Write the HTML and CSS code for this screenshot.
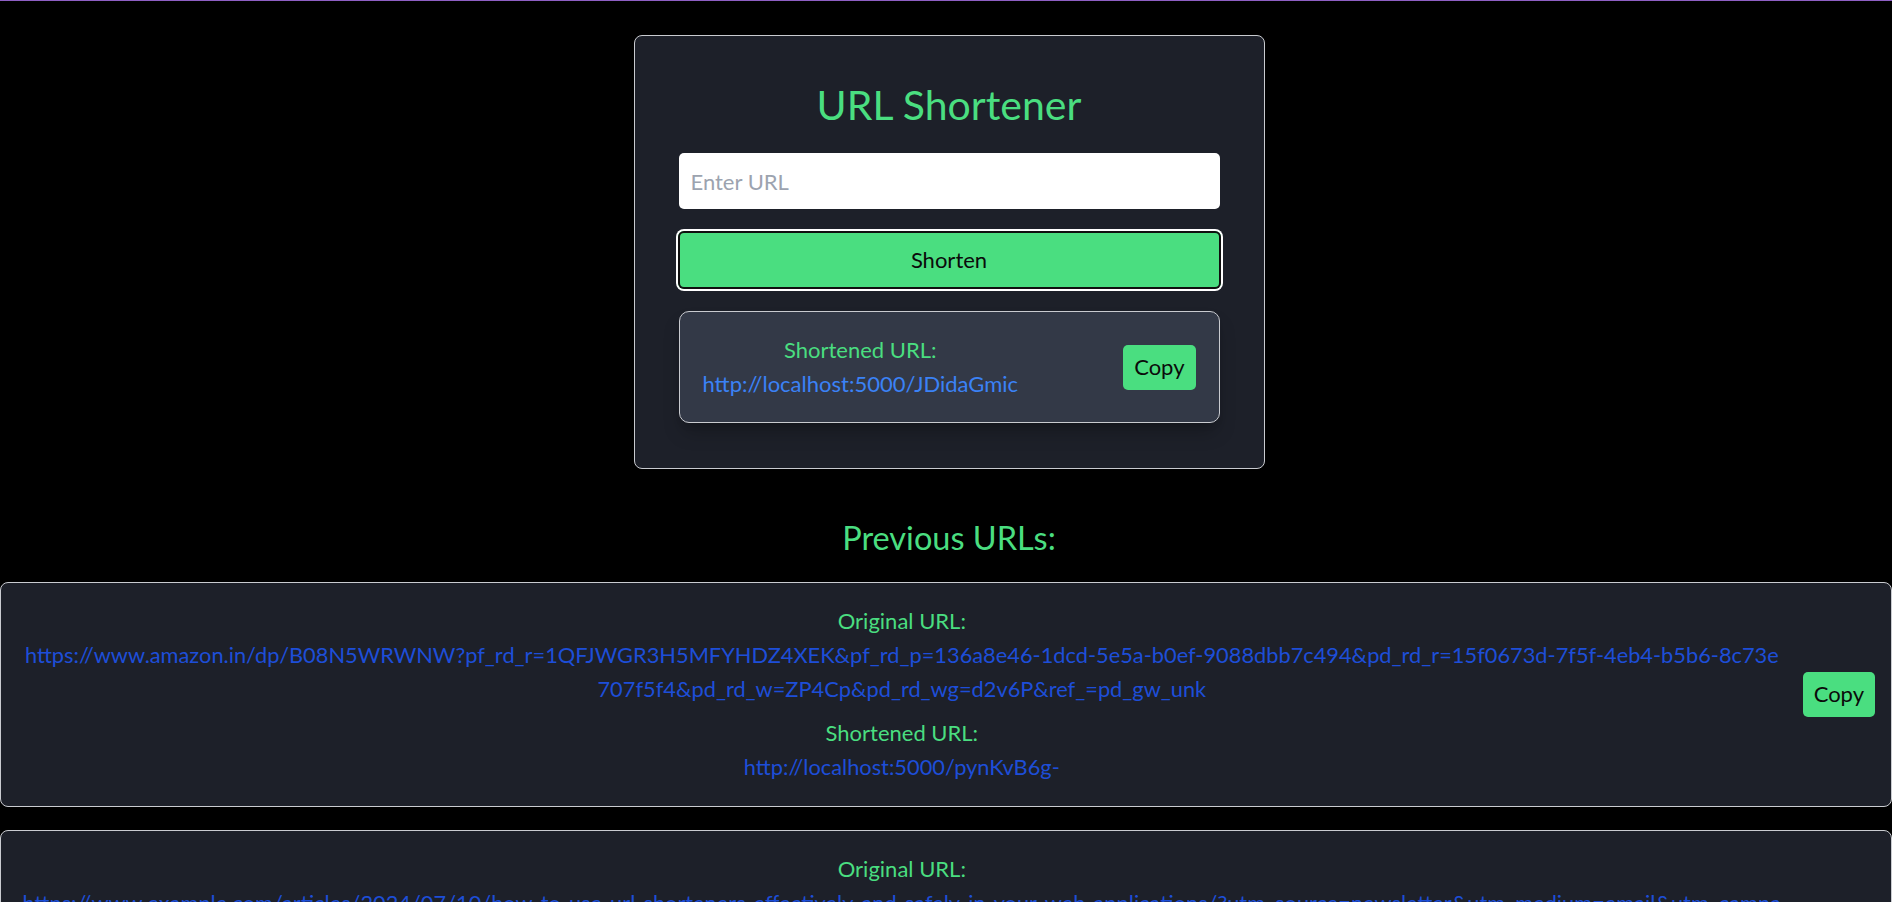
FILE: index.html
```html
<!DOCTYPE html>
<html lang="en">
<head>
<meta charset="utf-8">
<title>URL Shortener</title>
<link rel="stylesheet" href="styles.css">
</head>
<body>
<div class="topline"></div>
<main class="top">
  <section class="shortener">
    <h1 class="title">URL Shortener</h1>
    <input class="url-input" type="text" placeholder="Enter URL">
    <button class="shorten-btn" type="button">Shorten</button>
    <div class="result">
      <div class="result-text">
        <p class="label">Shortened URL:</p>
        <a class="result-link" href="#">http://localhost:5000/JDidaGmic</a>
      </div>
      <button class="copy-btn" type="button">Copy</button>
    </div>
  </section>
  <h2 class="prev-title">Previous URLs:</h2>
</main>
<ul class="history">
  <li class="item">
    <div class="item-text">
      <p class="label">Original URL:</p>
      <a class="orig-link" href="#">https://www.amazon.in/dp/B08N5WRWNW?pf_rd_r=1QFJWGR3H5MFYHDZ4XEK&amp;pf_rd_p=136a8e46-1dcd-5e5a-b0ef-9088dbb7c494&amp;pd_rd_r=15f0673d-7f5f-4eb4-b5b6-8c73e707f5f4&amp;pd_rd_w=ZP4Cp&amp;pd_rd_wg=d2v6P&amp;ref_=pd_gw_unk</a>
      <p class="label label-gap">Shortened URL:</p>
      <a class="short-link" href="#">http://localhost:5000/pynKvB6g-</a>
    </div>
    <button class="copy-btn" type="button">Copy</button>
  </li>
  <li class="item">
    <div class="item-text">
      <p class="label">Original URL:</p>
      <a class="orig-link" href="#">https://www.example.com/articles/2024/07/10/how-to-use-url-shorteners-effectively-and-safely-in-your-web-applications/?utm_source=newsletter&amp;utm_medium=email&amp;utm_campaign=july_2024_update&amp;utm_content=article_link</a>
      <p class="label label-gap">Shortened URL:</p>
      <a class="short-link" href="#">http://localhost:5000/Xk29fQmLp</a>
    </div>
    <button class="copy-btn" type="button">Copy</button>
  </li>
</ul>
</body>
</html>
```
FILE: styles.css
```css
* { box-sizing: border-box; }
html, body { margin: 0; padding: 0; }
body {
  background: #000;
  font-family: "Lato", "Noto Sans", sans-serif;
  color: #fff;
  overflow: hidden;
}
.topline { height: 1px; background: #8e5fc4; }
.top {
  display: flex;
  flex-direction: column;
  align-items: center;
  padding-left: 6px;
  padding-top: 34px;
}
.shortener {
  width: 631px;
  background: #1d2029;
  border: 1px solid #c9cbd0;
  border-radius: 8px;
  padding: 44px 44px 45px;
  display: flex;
  flex-direction: column;
}
.title {
  margin: 0 0 24px;
  font-size: 41px;
  line-height: 49px;
  font-weight: 400;
  color: #4ade80;
  text-align: center;
}
.url-input {
  height: 56px;
  width: 100%;
  border: none;
  border-radius: 5px;
  background: #fff;
  padding: 0 12px;
  font-family: inherit;
  font-size: 22px;
  color: #111;
  outline: none;
}
.url-input::placeholder { color: #9ca3af; }
.shorten-btn {
  margin: 22px -1px 0;
  height: 58px;
  background: #4ade80;
  border: none;
  border-radius: 6px;
  box-shadow: inset 0 0 0 2px #101010, 0 0 0 2px #fff;
  font-family: inherit;
  font-size: 22px;
  line-height: 34px;
  color: #0b0b0b;
  padding: 0;
}
.result {
  margin-top: 22px;
  display: flex;
  align-items: center;
  justify-content: space-between;
  background: #333947;
  border: 1px solid #c9cbd0;
  border-radius: 10px;
  padding: 21px 23px;
  box-shadow: 0 12px 19px -4px rgba(0,0,0,.25), 0 5px 8px -5px rgba(0,0,0,.2);
}
.result-text { text-align: center; }
.label {
  margin: 0;
  font-size: 22px;
  line-height: 34px;
  color: #4ade80;
}
.result-link {
  display: block;
  font-size: 22px;
  line-height: 34px;
  color: #3b82f6;
  text-decoration: none;
}
.copy-btn {
  flex: none;
  height: 45px;
  padding: 0 11px;
  background: #4ade80;
  border: none;
  border-radius: 5px;
  font-family: inherit;
  font-size: 22px;
  line-height: 34px;
  color: #0b0b0b;
}
.prev-title {
  margin: 49px 0 25px;
  font-size: 32.5px;
  line-height: 39px;
  font-weight: 400;
  color: #4ade80;
}
.history {
  list-style: none;
  margin: 0;
  padding: 0;
  display: flex;
  flex-direction: column;
  gap: 23px;
}
.item {
  display: flex;
  align-items: center;
  gap: 20px;
  background: #1d2029;
  border: 1px solid #c9cbd0;
  border-radius: 8px;
  padding: 21px 16px 22px 20px;
}
.item-text {
  flex: 1;
  min-width: 0;
  text-align: center;
}
.orig-link, .short-link {
  display: block;
  font-size: 21.8px;
  line-height: 34px;
  color: #1d4ed8;
  text-decoration: none;
  word-break: break-all;
}
.label-gap { margin-top: 10px; }
```
